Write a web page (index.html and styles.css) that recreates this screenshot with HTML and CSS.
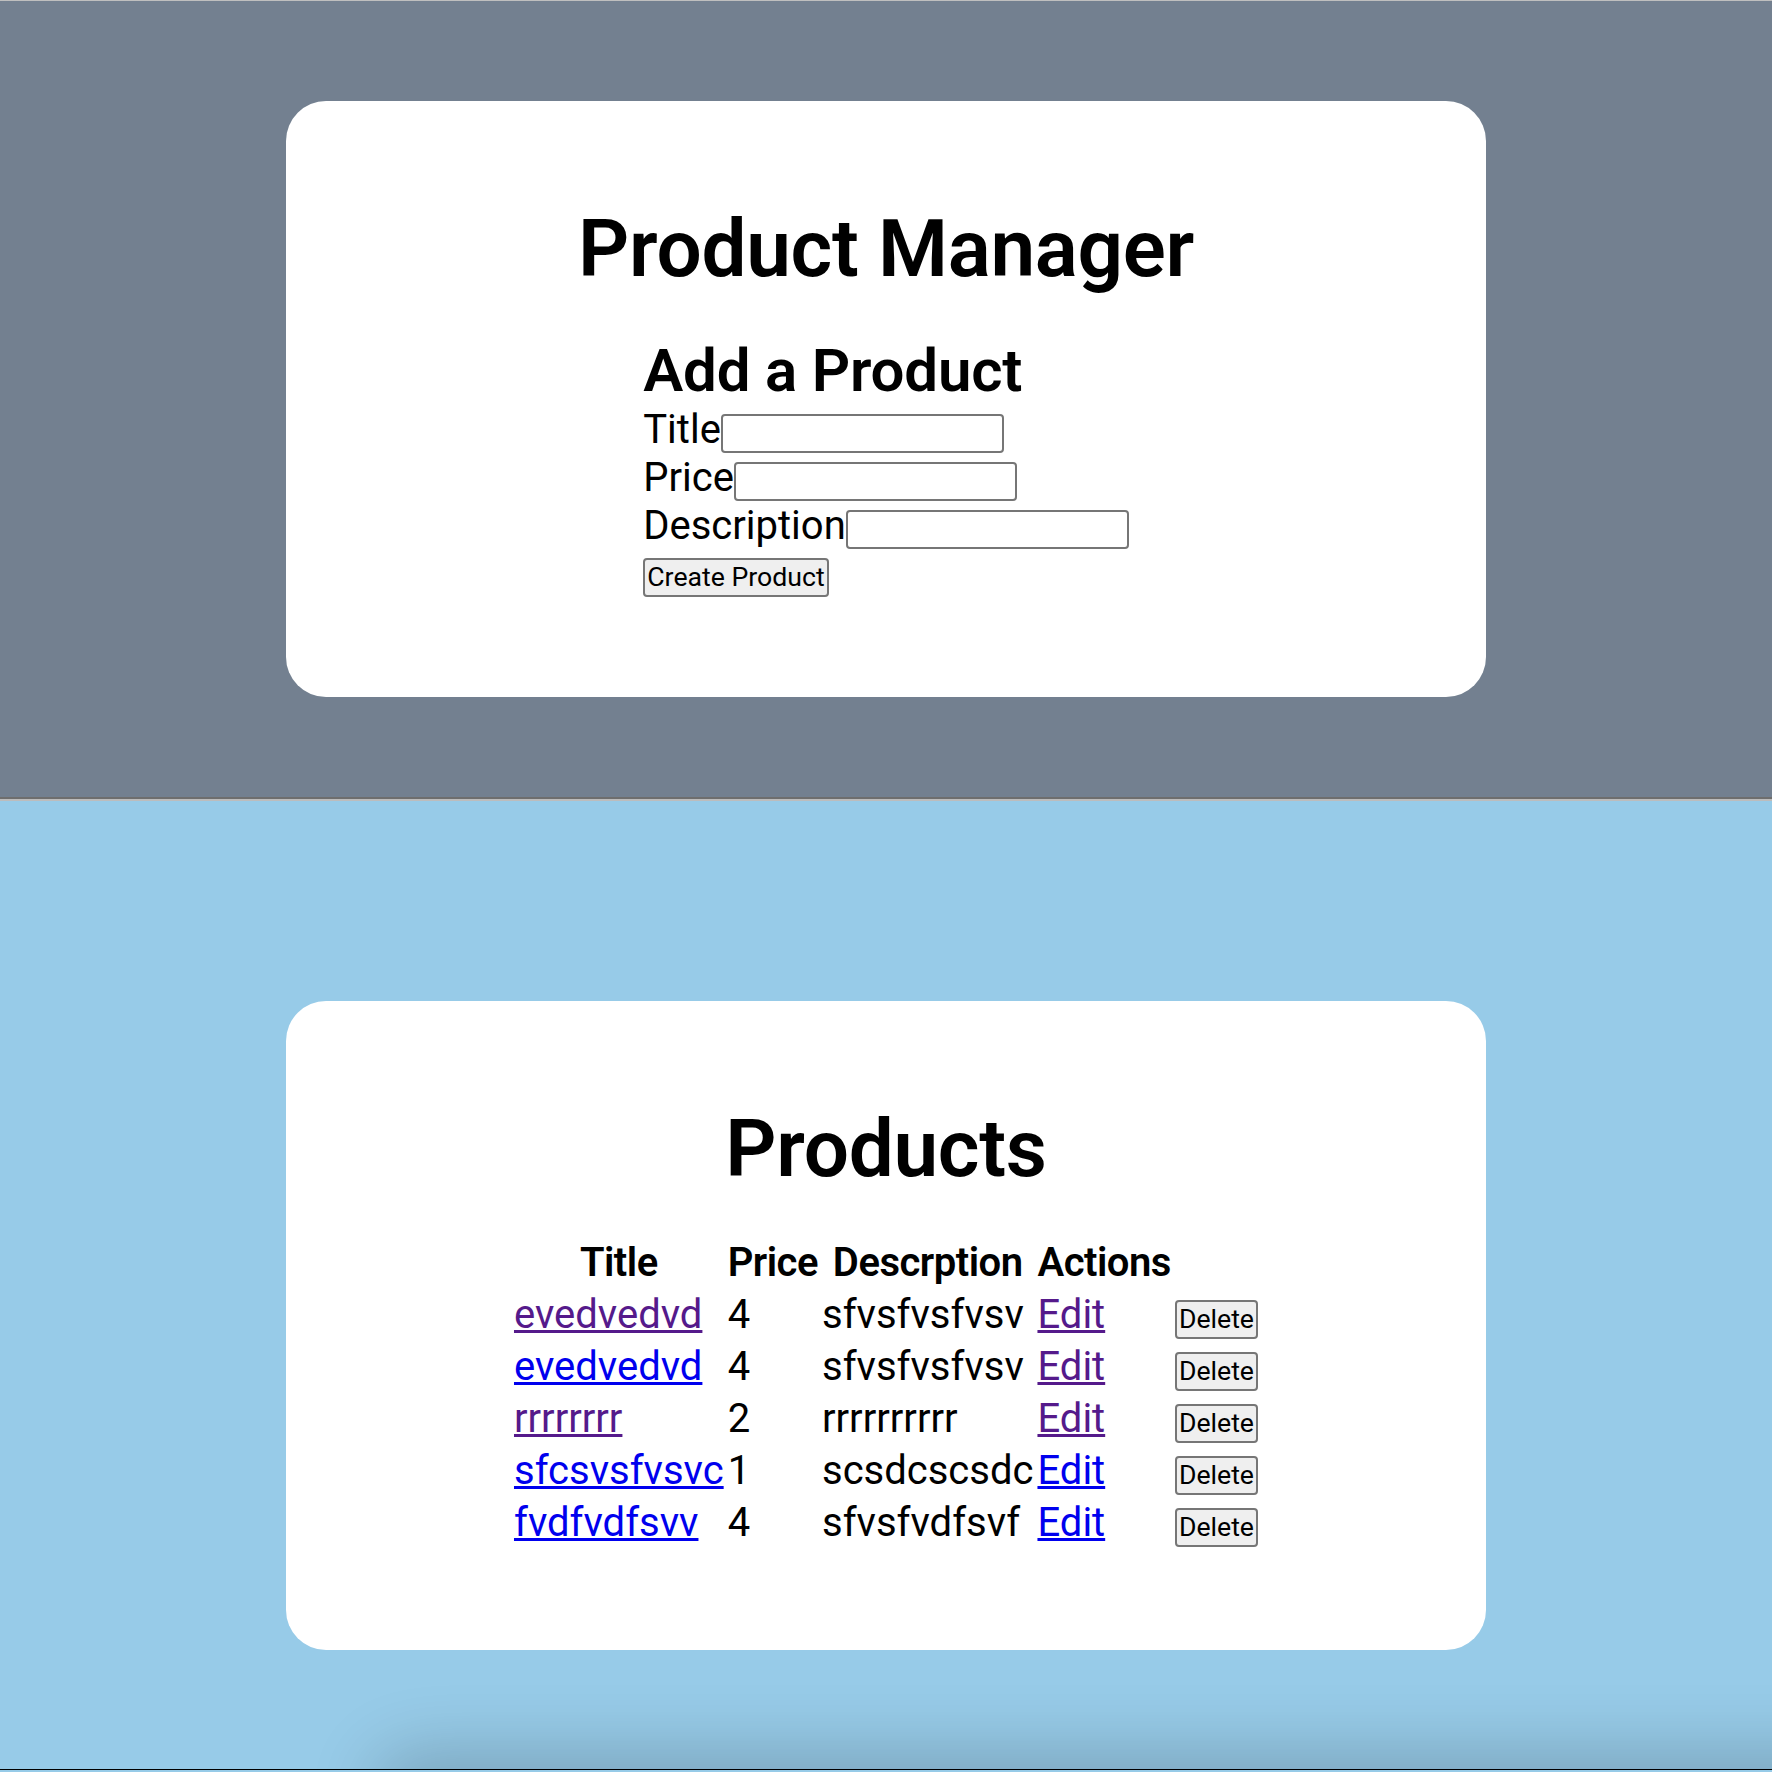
FILE: index.html
```html
<!DOCTYPE html>
<html lang="en">
<head>
<meta charset="utf-8">
<title>Product Manager</title>
<link rel="stylesheet" href="styles.css">
</head>
<body>
<section class="top">
  <div class="card">
    <h1 class="heading">Product Manager</h1>
    <form class="form">
      <h2 class="subheading">Add a Product</h2>
      <div class="row"><label class="label">Title</label><input class="field" type="text"></div>
      <div class="row"><label class="label">Price</label><input class="field" type="text"></div>
      <div class="row"><label class="label">Description</label><input class="field" type="text"></div>
      <button class="btn create" type="button">Create Product</button>
    </form>
  </div>
</section>
<hr class="divider">
<section class="bottom">
  <div class="card">
    <h1 class="heading">Products</h1>
    <table class="products">
      <thead>
        <tr><th>Title</th><th>Price</th><th>Descrption</th><th>Actions</th></tr>
      </thead>
      <tbody>
        <tr><td><a class="visited" href="#">evedvedvd</a></td><td>4</td><td>sfvsfvsfvsv</td><td><a class="visited" href="#">Edit</a></td><td><button class="btn" type="button">Delete</button></td></tr>
        <tr><td><a class="link" href="#">evedvedvd</a></td><td>4</td><td>sfvsfvsfvsv</td><td><a class="visited" href="#">Edit</a></td><td><button class="btn" type="button">Delete</button></td></tr>
        <tr><td><a class="visited" href="#">rrrrrrrr</a></td><td>2</td><td>rrrrrrrrrr</td><td><a class="visited" href="#">Edit</a></td><td><button class="btn" type="button">Delete</button></td></tr>
        <tr><td><a class="link" href="#">sfcsvsfvsvc</a></td><td>1</td><td>scsdcscsdc</td><td><a class="link" href="#">Edit</a></td><td><button class="btn" type="button">Delete</button></td></tr>
        <tr><td><a class="link" href="#">fvdfvdfsvv</a></td><td>4</td><td>sfvsfvdfsvf</td><td><a class="link" href="#">Edit</a></td><td><button class="btn" type="button">Delete</button></td></tr>
      </tbody>
    </table>
  </div>
</section>
</body>
</html>
```

FILE: styles.css
```css
html, body {
  margin: 0;
  padding: 0;
}

body {
  font-family: Roboto, "Liberation Sans", Arial, sans-serif;
  color: #000;
  background: #97cbe8;
}

.top {
  background: #738090;
  border-top: 1px solid #bfbfbf;
  padding: 100px 0;
}

.divider {
  margin: 0;
  height: 0;
  border: 0;
  border-top: 2px solid #6e6e6e;
  border-bottom: 2px solid #bcbcbc;
}

.bottom {
  position: relative;
  overflow: hidden;
  background: #97cbe8;
  padding: 200px 0 119px;
  border-bottom: 1px solid #000;
}

.bottom::after {
  content: "";
  position: absolute;
  left: 390px;
  right: -200px;
  bottom: -50px;
  height: 50px;
  border-radius: 50px;
  box-shadow: 0 0 70px 16px rgba(0, 0, 0, 0.2);
}

.card {
  width: 1200px;
  margin: 0 auto;
  background: #fff;
  border-radius: 40px;
  padding: 48px 0 100px;
  text-align: center;
  position: relative;
  z-index: 1;
}

.heading {
  font-size: 80px;
  font-weight: 600;
  line-height: 93.75px;
  letter-spacing: -0.3px;
  margin: 54px 0 39px;
}

.form {
  width: fit-content;
  margin: 0 auto;
  text-align: left;
}

.subheading {
  font-size: 60px;
  font-weight: 600;
  line-height: 70.3px;
  letter-spacing: -0.2px;
  margin: 0;
}

.row {
  display: flex;
  align-items: flex-start;
  height: 48px;
}

.label {
  font-size: 40px;
  line-height: 47px;
}

.field {
  box-sizing: border-box;
  width: 283px;
  height: 39px;
  margin: 8px 0 0;
  padding: 0 4px;
  border: 2px solid #767676;
  border-radius: 4px;
  background: #fff;
  font-family: Roboto, "Liberation Sans", Arial, sans-serif;
  font-size: 26.67px;
}

.btn {
  font-family: Roboto, "Liberation Sans", Arial, sans-serif;
  font-size: 26.67px;
  line-height: 31.25px;
  color: #000;
  background: #efefef;
  border: 2px solid #767676;
  border-radius: 4px;
  padding: 2px 2px;
  margin: 0;
}

.create {
  display: block;
  margin-top: 8px;
}

.products {
  margin: 2px auto 0;
  border-collapse: separate;
  border-spacing: 2px;
  font-size: 40px;
  line-height: 50px;
}

.products th {
  font-weight: 600;
  letter-spacing: -0.5px;
  text-align: center;
  padding: 0 1px;
}

.products td {
  text-align: left;
  padding: 0 1px;
  white-space: nowrap;
}

.products a {
  text-decoration: underline;
  text-decoration-thickness: 3px;
}

.products a.link {
  color: #0000ee;
}

.products a.visited {
  color: #551a8b;
}
```
